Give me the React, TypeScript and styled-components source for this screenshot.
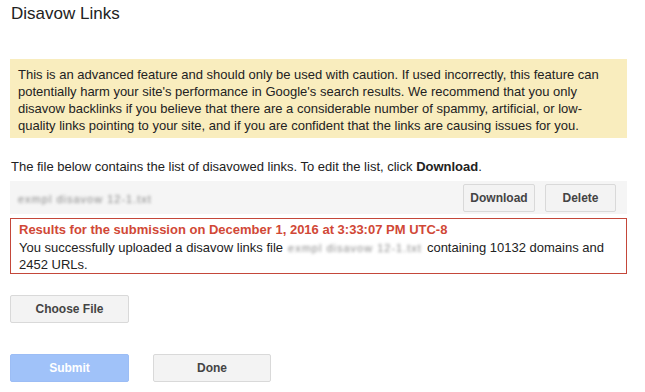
import styled, { createGlobalStyle } from "styled-components";

const GlobalStyle = createGlobalStyle`
  body {
    margin: 0;
    background: #fff;
    font-family: Arial, "Liberation Sans", sans-serif;
    color: #222;
  }
`;

const Page = styled.div`
  width: 617px;
  padding: 0 0 0 10px;
`;

const Title = styled.h1`
  margin: 0;
  padding: 4px 0 0 1px;
  height: 55px;
  font-size: 17px;
  font-weight: normal;
  line-height: 20px;
  color: #222;
`;

const Warning = styled.div`
  background-color: #f9edbe;
  padding: 7px 8px 4px 8px;
  font-size: 13px;
  line-height: 17px;
  color: #222;
`;

const Intro = styled.p`
  margin: 20px 0 0 1px;
  font-size: 13px;
  line-height: 17px;
  b {
    font-weight: bold;
    color: #222;
  }
`;

const FileRow = styled.div`
  margin-top: 6px;
  height: 33px;
  background-color: #f5f5f5;
  display: flex;
  align-items: center;
  padding: 0 11px 0 8px;
  gap: 10px;
`;

const Blurred = styled.span<{ $gap?: number }>`
  display: inline-block;
  margin: 0 ${(p) => p.$gap ?? 0}px;
  filter: blur(1.4px);
  color: #8a8a8a;
  font-size: 11px;
  line-height: 13px;
  letter-spacing: 1px;
`;

const FileName = styled.div`
  flex: 1;
`;

const Button = styled.button<{ $width: number; $primary?: boolean }>`
  width: ${(p) => p.$width}px;
  height: 28px;
  border-radius: 2px;
  border: 1px solid ${(p) => (p.$primary ? "#9cbdf5" : "#d9d9d9")};
  background-color: ${(p) => (p.$primary ? "#a0c2f9" : "#f3f3f3")};
  color: ${(p) => (p.$primary ? "#fff" : "#444")};
  font-family: Arial, "Liberation Sans", sans-serif;
  font-size: 12px;
  font-weight: bold;
  padding: 0;
  cursor: pointer;
`;

const Result = styled.div`
  margin-top: 4px;
  border: 1px solid #c4473a;
  padding: 2px 8px 0 8px;
  font-size: 13px;
  line-height: 17px;
`;

const ResultTitle = styled.div`
  color: #d14836;
  font-weight: bold;
  margin-bottom: 1px;
`;

const ActionRow = styled.div<{ $top: number }>`
  margin-top: ${(p) => p.$top}px;
  display: flex;
  gap: 24px;
`;

export default function App() {
  return (
    <Page>
      <GlobalStyle />
      <Title>Disavow Links</Title>
      <Warning>
        This is an advanced feature and should only be used with caution. If used incorrectly, this feature can
        potentially harm your site's performance in Google's search results. We recommend that you only
        disavow backlinks if you believe that there are a considerable number of spammy, artificial, or low-
        quality links pointing to your site, and if you are confident that the links are causing issues for you.
      </Warning>
      <Intro>
        The file below contains the list of disavowed links. To edit the list, click <b>Download</b>.
      </Intro>
      <FileRow>
        <FileName>
          <Blurred>exmpl disavow 12-1.txt</Blurred>
        </FileName>
        <Button $width={72}>Download</Button>
        <Button $width={71}>Delete</Button>
      </FileRow>
      <Result>
        <ResultTitle>Results for the submission on December 1, 2016 at 3:33:07 PM UTC-8</ResultTitle>
        You successfully uploaded a disavow links file<Blurred $gap={5}>exmpl disavow 12-1.txt</Blurred>containing
        10132 domains and
        <br />
        2452 URLs.
      </Result>
      <ActionRow $top={21}>
        <Button $width={119}>Choose File</Button>
      </ActionRow>
      <ActionRow $top={31}>
        <Button $width={119} $primary>
          Submit
        </Button>
        <Button $width={118}>Done</Button>
      </ActionRow>
    </Page>
  );
}
